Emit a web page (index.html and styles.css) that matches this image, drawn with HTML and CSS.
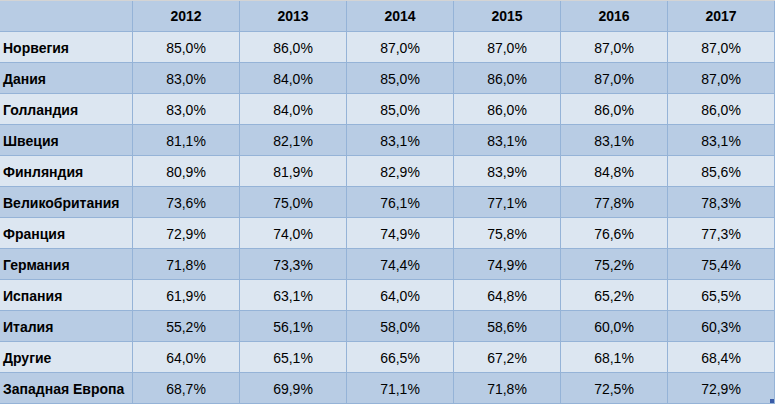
FILE: index.html
```html
<!DOCTYPE html>
<html lang="ru">
<head>
<meta charset="utf-8">
<title>Таблица</title>
<link rel="stylesheet" href="styles.css">
</head>
<body>
<div class="sheet">
  <div class="grid">
    <div class="cell head name"></div>
    <div class="cell head">2012</div>
    <div class="cell head">2013</div>
    <div class="cell head">2014</div>
    <div class="cell head">2015</div>
    <div class="cell head">2016</div>
    <div class="cell head">2017</div>

    <div class="cell light name">Норвегия</div>
    <div class="cell light">85,0%</div><div class="cell light">86,0%</div><div class="cell light">87,0%</div><div class="cell light">87,0%</div><div class="cell light">87,0%</div><div class="cell light">87,0%</div>

    <div class="cell dark name">Дания</div>
    <div class="cell dark">83,0%</div><div class="cell dark">84,0%</div><div class="cell dark">85,0%</div><div class="cell dark">86,0%</div><div class="cell dark">87,0%</div><div class="cell dark">87,0%</div>

    <div class="cell light name">Голландия</div>
    <div class="cell light">83,0%</div><div class="cell light">84,0%</div><div class="cell light">85,0%</div><div class="cell light">86,0%</div><div class="cell light">86,0%</div><div class="cell light">86,0%</div>

    <div class="cell dark name">Швеция</div>
    <div class="cell dark">81,1%</div><div class="cell dark">82,1%</div><div class="cell dark">83,1%</div><div class="cell dark">83,1%</div><div class="cell dark">83,1%</div><div class="cell dark">83,1%</div>

    <div class="cell light name">Финляндия</div>
    <div class="cell light">80,9%</div><div class="cell light">81,9%</div><div class="cell light">82,9%</div><div class="cell light">83,9%</div><div class="cell light">84,8%</div><div class="cell light">85,6%</div>

    <div class="cell dark name">Великобритания</div>
    <div class="cell dark">73,6%</div><div class="cell dark">75,0%</div><div class="cell dark">76,1%</div><div class="cell dark">77,1%</div><div class="cell dark">77,8%</div><div class="cell dark">78,3%</div>

    <div class="cell light name">Франция</div>
    <div class="cell light">72,9%</div><div class="cell light">74,0%</div><div class="cell light">74,9%</div><div class="cell light">75,8%</div><div class="cell light">76,6%</div><div class="cell light">77,3%</div>

    <div class="cell dark name">Германия</div>
    <div class="cell dark">71,8%</div><div class="cell dark">73,3%</div><div class="cell dark">74,4%</div><div class="cell dark">74,9%</div><div class="cell dark">75,2%</div><div class="cell dark">75,4%</div>

    <div class="cell light name">Испания</div>
    <div class="cell light">61,9%</div><div class="cell light">63,1%</div><div class="cell light">64,0%</div><div class="cell light">64,8%</div><div class="cell light">65,2%</div><div class="cell light">65,5%</div>

    <div class="cell dark name">Италия</div>
    <div class="cell dark">55,2%</div><div class="cell dark">56,1%</div><div class="cell dark">58,0%</div><div class="cell dark">58,6%</div><div class="cell dark">60,0%</div><div class="cell dark">60,3%</div>

    <div class="cell light name">Другие</div>
    <div class="cell light">64,0%</div><div class="cell light">65,1%</div><div class="cell light">66,5%</div><div class="cell light">67,2%</div><div class="cell light">68,1%</div><div class="cell light">68,4%</div>

    <div class="cell dark name">Западная Европа</div>
    <div class="cell dark">68,7%</div><div class="cell dark">69,9%</div><div class="cell dark">71,1%</div><div class="cell dark">71,8%</div><div class="cell dark">72,5%</div><div class="cell dark">72,9%</div>
  </div>
  <div class="handle"></div>
</div>
</body>
</html>
```
FILE: styles.css
```css
html, body {
  margin: 0;
  padding: 0;
  background: #ffffff;
}

.sheet {
  position: relative;
  width: 775px;
  height: 404px;
  overflow: hidden;
  border-top: 1px solid #d4d4d4;
  box-sizing: border-box;
}

.grid {
  display: grid;
  grid-template-columns: 133px repeat(6, 107px);
  grid-auto-rows: 31px;
  font-family: "Liberation Sans", Arial, sans-serif;
  font-size: 14px;
  color: #000000;
}

.cell {
  border-right: 1px solid #95b3d7;
  border-bottom: 1px solid #95b3d7;
  text-align: center;
  line-height: 28px;
  padding-top: 2px;
  white-space: nowrap;
}

.head {
  background: #b8cce4;
  font-weight: bold;
  line-height: 29px;
  padding-top: 1px;
}

.light {
  background: #dce6f1;
}

.dark {
  background: #b8cce4;
}

.name {
  text-align: left;
  font-weight: bold;
  padding-left: 3px;
}

.handle {
  position: absolute;
  right: 1px;
  bottom: 1px;
  width: 4px;
  height: 4px;
  background: #3a5ca8;
}
```
